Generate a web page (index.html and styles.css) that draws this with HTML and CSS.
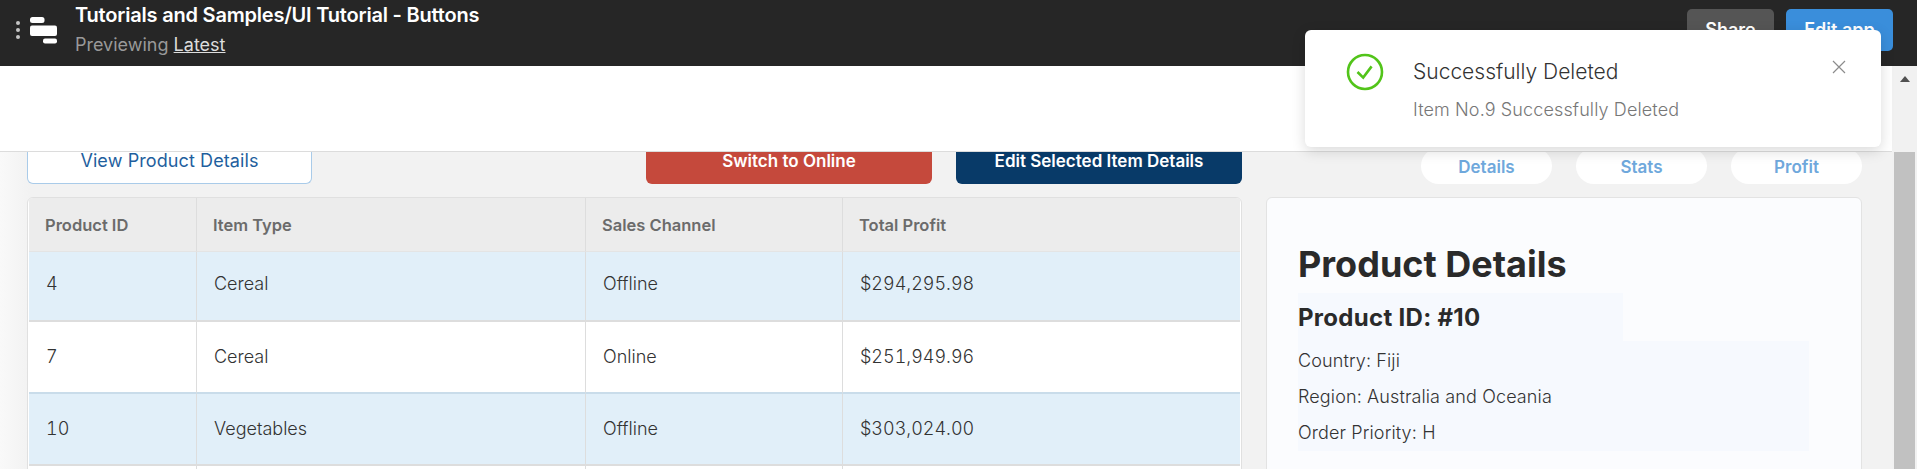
FILE: index.html
```html
<!doctype html>
<html lang="en">
<head>
	<meta charset="UTF-8">
	<title>UI Tutorial - Buttons</title>
	<link rel="stylesheet" href="styles.css">
</head>
<body>
	<div class="topbar">
		<div class="menu_dots"><span></span><span></span><span></span></div>
		<svg class="logo" width="27" height="27" viewBox="0 0 27 27">
			<rect x="0" y="0" width="14.5" height="6" rx="2.5" fill="#fff"/>
			<rect x="0" y="8.5" width="27" height="10.5" rx="2" fill="#fff"/>
			<rect x="13" y="21.5" width="14" height="5" rx="2" fill="#fff"/>
		</svg>
		<div class="app_title">
			<div class="app_name">Tutorials and Samples/UI Tutorial - Buttons</div>
			<div class="app_sub">Previewing <a href="#">Latest</a></div>
		</div>
		<a class="top_btn share_btn" href="#">Share</a>
		<a class="top_btn edit_btn" href="#">Edit app</a>
	</div>

	<div class="page">
		<div class="main">
			<div class="band"></div>
			<div class="content">
				<div class="toolbar">
					<div class="tool_left">
						<a class="btn btn_view" href="#">View Product Details</a>
						<a class="btn btn_red" href="#">Switch to Online</a>
						<a class="btn btn_navy" href="#">Edit Selected Item Details</a>
					</div>
					<div class="tool_right">
						<a class="pill" href="#">Details</a>
						<a class="pill" href="#">Stats</a>
						<a class="pill" href="#">Profit</a>
					</div>
				</div>
				<div class="columns">
					<div class="table_wrap">
						<table>
							<colgroup>
								<col class="col_id"><col class="col_type"><col class="col_channel"><col>
							</colgroup>
							<thead>
								<tr><th>Product ID</th><th>Item Type</th><th>Sales Channel</th><th>Total Profit</th></tr>
							</thead>
							<tbody>
								<tr class="picked first_row"><td>4</td><td>Cereal</td><td>Offline</td><td>$294,295.98</td></tr>
								<tr class="before_picked"><td>7</td><td>Cereal</td><td>Online</td><td>$251,949.96</td></tr>
								<tr class="picked"><td>10</td><td>Vegetables</td><td>Offline</td><td>$303,024.00</td></tr>
								<tr><td></td><td></td><td></td><td></td></tr>
							</tbody>
						</table>
					</div>
					<div class="panel">
						<h1>Product Details</h1>
						<div class="id_box"><h2>Product ID: #10</h2></div>
						<div class="info_box">
							<p>Country: Fiji</p>
							<p>Region: Australia and Oceania</p>
							<p>Order Priority: H</p>
						</div>
					</div>
				</div>
			</div>
		</div>
		<div class="scrollbar">
			<div class="arrow_up"></div>
			<div class="thumb"></div>
		</div>
	</div>

	<div class="toast">
		<svg class="toast_icon" width="38" height="38" viewBox="0 0 38 38">
			<circle cx="19" cy="19" r="17" fill="none" stroke="#52c41a" stroke-width="2.6"/>
			<path d="M11.5 19 L17.2 24.6 L25.6 13.4" fill="none" stroke="#52c41a" stroke-width="2.6"/>
		</svg>
		<div class="toast_text">
			<div class="toast_title">Successfully Deleted</div>
			<div class="toast_msg">Item No.9 Successfully Deleted</div>
		</div>
		<svg class="toast_close" width="14" height="14" viewBox="0 0 14 14">
			<path d="M1 1 L13 13 M13 1 L1 13" fill="none" stroke="#8c8c8c" stroke-width="1.2"/>
		</svg>
	</div>
</body>
</html>
```

FILE: styles.css
```css
*{
	margin: 0;
	padding: 0;
	box-sizing: border-box;
}
html,body{
	height: 100%;
	overflow: hidden;
}
body{
	display: flex;
	flex-direction: column;
	font-family: Inter, "Liberation Sans", sans-serif;
	font-size: 18px;
	font-weight: 300;
	color: #333;
	background: #f2f2f2;
}
a{
	text-decoration: none;
}

/* top bar */
.topbar{
	flex: none;
	height: 66px;
	display: flex;
	align-items: flex-start;
	background: #262626;
}
.menu_dots{
	display: flex;
	flex-direction: column;
	gap: 3px;
	margin: 21px 0 0 16px;
}
.menu_dots span{
	display: block;
	width: 4px;
	height: 4px;
	border-radius: 50%;
	background: #c4c4c4;
}
.logo{
	margin: 17px 0 0 10px;
}
.app_title{
	margin-left: 18px;
}
.app_name{
	font-size: 20px;
	line-height: 30px;
	font-weight: 600;
	letter-spacing: -.2px;
	color: #fff;
}
.app_sub{
	font-size: 18px;
	line-height: 30px;
	font-weight: 400;
	color: #999;
}
.app_sub a{
	color: #ddd;
	text-decoration: underline;
}
.top_btn{
	height: 42px;
	margin-top: 9px;
	border-radius: 5px;
	font-size: 18px;
	line-height: 42px;
	font-weight: 600;
	text-align: center;
	color: #fff;
}
.share_btn{
	width: 87px;
	margin-left: auto;
	background: #555;
}
.edit_btn{
	width: 107px;
	margin: 9px 24px 0 12px;
	background: #3a8edb;
}

/* page under the bar */
.page{
	flex: 1;
	min-height: 0;
	display: flex;
}
.main{
	flex: 1;
	min-width: 0;
	display: flex;
	flex-direction: column;
	overflow: hidden;
	background: linear-gradient(90deg, #f9f9f9, #f2f2f2 30px);
}
/* the band stays on top, the pills run under it */
.band{
	flex: none;
	position: relative;
	z-index: 1;
	height: 86px;
	background: #fff;
	border-bottom: 1px solid #dcdcdc;
}
.content{
	padding: 0 30px 0 27px;
}
.toolbar{
	display: grid;
	grid-template-columns: 1215px 1fr;
	grid-template-rows: 32px;
	gap: 24px;
	height: 32px;
}
.tool_left,.tool_right{
	display: flex;
	align-items: flex-end;
	gap: 24px;
}
.tool_right{
	justify-content: flex-end;
}
.btn{
	flex: none;
	width: 286px;
	height: 32px;
	border-radius: 0 0 6px 6px;
	font-size: 17px;
	line-height: 18px;
	text-align: center;
	color: #fff;
	font-weight: 600;
}
.btn_view{
	width: 285px;
	margin-right: auto;
	background: #fff;
	border: 1px solid #a9cbe9;
	border-top: 0;
	font-size: 18px;
	font-weight: 400;
	letter-spacing: .1px;
	color: #1f5f9e;
}
.btn_red{
	background: #c5493c;
}
.btn_navy{
	background: #083a68;
}
.pill{
	flex: none;
	width: 131px;
	height: 36px;
	border-radius: 18px;
	background: #fff;
	font-size: 17px;
	line-height: 38px;
	font-weight: 600;
	text-align: center;
	color: #6fa8dc;
}

.columns{
	display: grid;
	grid-template-columns: 1215px 1fr;
	gap: 24px;
	margin-top: 13px;
}

/* table */
.table_wrap{
	padding: 0 1px;
	border: 1px solid #e0e0e0;
	border-radius: 6px;
	background: #fff;
	overflow: hidden;
}
table{
	width: 100%;
	table-layout: fixed;
	border-spacing: 0;
}
.col_id{
	width: 168px;
}
.col_type{
	width: 389px;
}
.col_channel{
	width: 257px;
}
th,td{
	padding: 0 17px;
	text-align: left;
	border-right: 1px solid #ddd;
}
th:last-child,td:last-child{
	border-right: 0;
}
th{
	height: 54px;
	padding-left: 16px;
	font-size: 16.5px;
	font-weight: 600;
	color: #6b6b6b;
	background: #ececec;
	border-bottom: 1px solid #e4e4e4;
}
td{
	height: 72px;
	padding-bottom: 2px;
	font-variant-numeric: tabular-nums;
	background: #fff;
	border-bottom: 2px solid #ddd;
}
.first_row td{
	height: 70px;
	padding-bottom: 6px;
}
.picked td{
	background: #e1eff9;
}
.before_picked td{
	border-bottom-color: #c9dcea;
}

/* right panel */
.panel{
	height: 400px;
	padding: 44px 30px 0 31px;
	border: 1px solid #e3e3e3;
	border-radius: 6px;
	background: #fbfcfe;
	color: #333;
}
.panel h1{
	margin-bottom: 7px;
	font-size: 36px;
	line-height: 44px;
	font-weight: 700;
	color: #2a2a2a;
}
.id_box{
	width: 325px;
	height: 48px;
	background: #f6f9fe;
}
.id_box h2{
	font-size: 24px;
	line-height: 50px;
	font-weight: 700;
	letter-spacing: .3px;
	color: #2a2a2a;
}
.info_box{
	width: 511px;
	padding-top: 2px;
	letter-spacing: .12px;
	background: #f6f9fe;
}
.info_box p{
	line-height: 36px;
}

/* scrollbar */
.scrollbar{
	flex: none;
	width: 25px;
	padding: 10px 2px 0;
	background: #f1f1f1;
}
.arrow_up{
	width: 0;
	height: 0;
	margin: 0 auto;
	border-left: 5.5px solid transparent;
	border-right: 5.5px solid transparent;
	border-bottom: 6px solid #505050;
}
.thumb{
	height: 317px;
	margin-top: 70px;
	background: #c1c1c1;
}

/* toast lies over the page */
.toast{
	position: absolute;
	z-index: 2;
	left: 1305px;
	top: 30px;
	width: 576px;
	height: 117px;
	display: flex;
	align-items: flex-start;
	border-radius: 6px;
	background: #fff;
	box-shadow: 0 4px 14px rgba(0,0,0,.15);
}
.toast_icon{
	flex: none;
	margin: 23px 0 0 41px;
}
.toast_text{
	margin-left: 29px;
}
.toast_title{
	margin-top: 27px;
	font-size: 21px;
	line-height: 30px;
	color: #333;
}
.toast_msg{
	margin-top: 9px;
	font-size: 18px;
	line-height: 28px;
	letter-spacing: .12px;
	color: #777;
}
.toast_close{
	margin: 30px 35px 0 auto;
}
```
